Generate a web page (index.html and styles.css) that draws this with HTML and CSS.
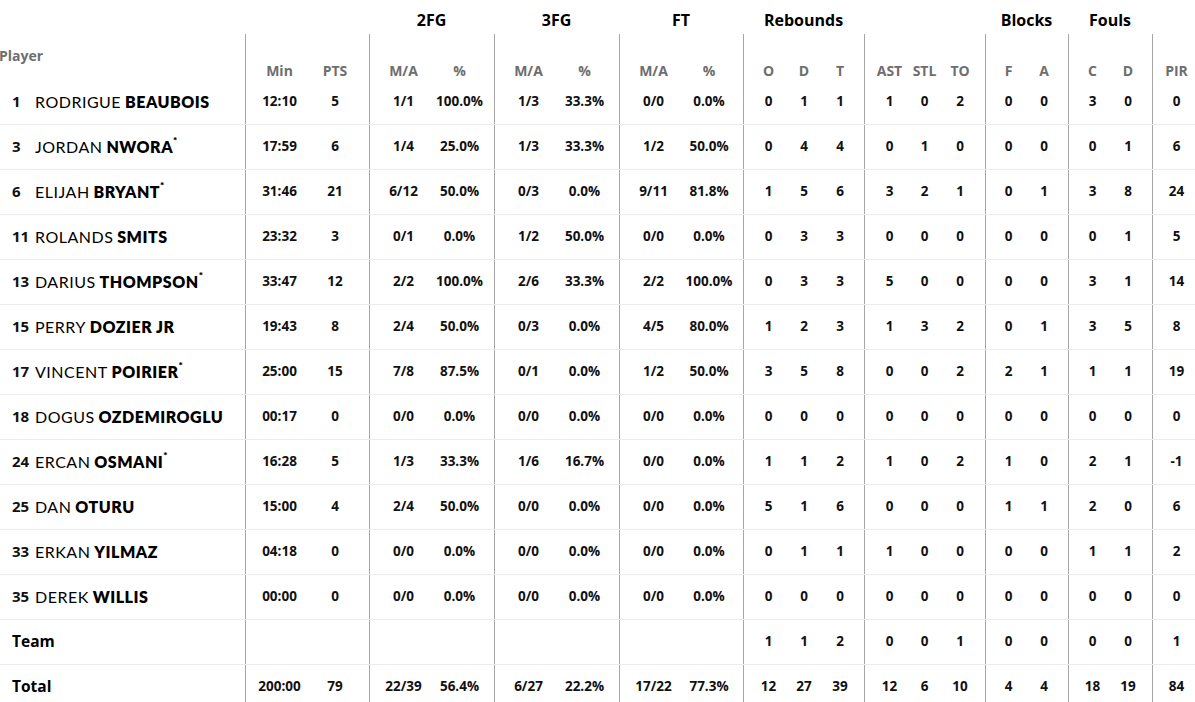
FILE: index.html
```html
<!DOCTYPE html>
<html>
<head>
<meta charset="utf-8">
<link rel="stylesheet" href="styles.css">
</head>
<body>
<div class="box">
  <div class="groups">
    <div></div><div class="span2"></div>
    <div class="span2">2FG</div><div class="span2">3FG</div><div class="span2">FT</div>
    <div class="span3">Rebounds</div><div class="span3"></div>
    <div class="span2">Blocks</div><div class="span2">Fouls</div><div></div>
  </div>
  <div class="row head">
    <div class="pl">Player</div><div>Min</div><div>PTS</div><div>M/A</div><div>%</div><div>M/A</div><div>%</div><div>M/A</div><div>%</div><div>O</div><div>D</div><div>T</div><div>AST</div><div>STL</div><div>TO</div><div>F</div><div>A</div><div>C</div><div>D</div><div>PIR</div>
  </div>
  <div class="row"><div class="pl"><span class="no">1</span><span class="fn">RODRIGUE</span>&nbsp;<b>BEAUBOIS</b></div><div>12:10</div><div>5</div><div>1/1</div><div>100.0%</div><div>1/3</div><div>33.3%</div><div>0/0</div><div>0.0%</div><div>0</div><div>1</div><div>1</div><div>1</div><div>0</div><div>2</div><div>0</div><div>0</div><div>3</div><div>0</div><div>0</div></div>
  <div class="row"><div class="pl"><span class="no">3</span><span class="fn">JORDAN</span>&nbsp;<b>NWORA<sup>*</sup></b></div><div>17:59</div><div>6</div><div>1/4</div><div>25.0%</div><div>1/3</div><div>33.3%</div><div>1/2</div><div>50.0%</div><div>0</div><div>4</div><div>4</div><div>0</div><div>1</div><div>0</div><div>0</div><div>0</div><div>0</div><div>1</div><div>6</div></div>
  <div class="row"><div class="pl"><span class="no">6</span><span class="fn">ELIJAH</span>&nbsp;<b>BRYANT<sup>*</sup></b></div><div>31:46</div><div>21</div><div>6/12</div><div>50.0%</div><div>0/3</div><div>0.0%</div><div>9/11</div><div>81.8%</div><div>1</div><div>5</div><div>6</div><div>3</div><div>2</div><div>1</div><div>0</div><div>1</div><div>3</div><div>8</div><div>24</div></div>
  <div class="row"><div class="pl"><span class="no">11</span><span class="fn">ROLANDS</span>&nbsp;<b>SMITS</b></div><div>23:32</div><div>3</div><div>0/1</div><div>0.0%</div><div>1/2</div><div>50.0%</div><div>0/0</div><div>0.0%</div><div>0</div><div>3</div><div>3</div><div>0</div><div>0</div><div>0</div><div>0</div><div>0</div><div>0</div><div>1</div><div>5</div></div>
  <div class="row"><div class="pl"><span class="no">13</span><span class="fn">DARIUS</span>&nbsp;<b>THOMPSON<sup>*</sup></b></div><div>33:47</div><div>12</div><div>2/2</div><div>100.0%</div><div>2/6</div><div>33.3%</div><div>2/2</div><div>100.0%</div><div>0</div><div>3</div><div>3</div><div>5</div><div>0</div><div>0</div><div>0</div><div>0</div><div>3</div><div>1</div><div>14</div></div>
  <div class="row"><div class="pl"><span class="no">15</span><span class="fn">PERRY</span>&nbsp;<b>DOZIER JR</b></div><div>19:43</div><div>8</div><div>2/4</div><div>50.0%</div><div>0/3</div><div>0.0%</div><div>4/5</div><div>80.0%</div><div>1</div><div>2</div><div>3</div><div>1</div><div>3</div><div>2</div><div>0</div><div>1</div><div>3</div><div>5</div><div>8</div></div>
  <div class="row"><div class="pl"><span class="no">17</span><span class="fn">VINCENT</span>&nbsp;<b>POIRIER<sup>*</sup></b></div><div>25:00</div><div>15</div><div>7/8</div><div>87.5%</div><div>0/1</div><div>0.0%</div><div>1/2</div><div>50.0%</div><div>3</div><div>5</div><div>8</div><div>0</div><div>0</div><div>2</div><div>2</div><div>1</div><div>1</div><div>1</div><div>19</div></div>
  <div class="row"><div class="pl"><span class="no">18</span><span class="fn">DOGUS</span>&nbsp;<b>OZDEMIROGLU</b></div><div>00:17</div><div>0</div><div>0/0</div><div>0.0%</div><div>0/0</div><div>0.0%</div><div>0/0</div><div>0.0%</div><div>0</div><div>0</div><div>0</div><div>0</div><div>0</div><div>0</div><div>0</div><div>0</div><div>0</div><div>0</div><div>0</div></div>
  <div class="row"><div class="pl"><span class="no">24</span><span class="fn">ERCAN</span>&nbsp;<b>OSMANI<sup>*</sup></b></div><div>16:28</div><div>5</div><div>1/3</div><div>33.3%</div><div>1/6</div><div>16.7%</div><div>0/0</div><div>0.0%</div><div>1</div><div>1</div><div>2</div><div>1</div><div>0</div><div>2</div><div>1</div><div>0</div><div>2</div><div>1</div><div>-1</div></div>
  <div class="row"><div class="pl"><span class="no">25</span><span class="fn">DAN</span>&nbsp;<b>OTURU</b></div><div>15:00</div><div>4</div><div>2/4</div><div>50.0%</div><div>0/0</div><div>0.0%</div><div>0/0</div><div>0.0%</div><div>5</div><div>1</div><div>6</div><div>0</div><div>0</div><div>0</div><div>1</div><div>1</div><div>2</div><div>0</div><div>6</div></div>
  <div class="row"><div class="pl"><span class="no">33</span><span class="fn">ERKAN</span>&nbsp;<b>YILMAZ</b></div><div>04:18</div><div>0</div><div>0/0</div><div>0.0%</div><div>0/0</div><div>0.0%</div><div>0/0</div><div>0.0%</div><div>0</div><div>1</div><div>1</div><div>1</div><div>0</div><div>0</div><div>0</div><div>0</div><div>1</div><div>1</div><div>2</div></div>
  <div class="row"><div class="pl"><span class="no">35</span><span class="fn">DEREK</span>&nbsp;<b>WILLIS</b></div><div>00:00</div><div>0</div><div>0/0</div><div>0.0%</div><div>0/0</div><div>0.0%</div><div>0/0</div><div>0.0%</div><div>0</div><div>0</div><div>0</div><div>0</div><div>0</div><div>0</div><div>0</div><div>0</div><div>0</div><div>0</div><div>0</div></div>
  <div class="row"><div class="pl tot">Team</div><div></div><div></div><div></div><div></div><div></div><div></div><div></div><div></div><div>1</div><div>1</div><div>2</div><div>0</div><div>0</div><div>1</div><div>0</div><div>0</div><div>0</div><div>0</div><div>1</div></div>
  <div class="row"><div class="pl tot">Total</div><div>200:00</div><div>79</div><div>22/39</div><div>56.4%</div><div>6/27</div><div>22.2%</div><div>17/22</div><div>77.3%</div><div>12</div><div>27</div><div>39</div><div>12</div><div>6</div><div>10</div><div>4</div><div>4</div><div>18</div><div>19</div><div>84</div></div>
</div>
</body>
</html>
```

FILE: styles.css
```css
html, body {
  margin: 0;
  padding: 0;
  background: #fff;
  overflow: hidden;
}
body {
  font-family: "Open Sans", "Liberation Sans", sans-serif;
  color: #111;
  width: 1195px;
  height: 702px;
}
.box {
  margin-left: -2px;
  width: 1202px;
}
.groups, .row {
  display: grid;
  grid-template-columns: 247px 62px 62px 62px 63px 62px 63px 62px 62px 43px 36px 42px 43px 35px 43px 41px 42px 42px 42px 48px;
}
.groups {
  height: 34px;
  font-weight: 700;
  font-size: 16px;
  color: #000;
}
.groups > div {
  text-align: center;
  padding-top: 9px;
}
.span2 { grid-column: span 2; }
.span3 { grid-column: span 3; }
.row {
  height: 45px;
  border-bottom: 1px solid #ececec;
  box-sizing: border-box;
  font-size: 13.5px;
  font-weight: 700;
}
.row > div {
  box-sizing: border-box;
  display: flex;
  align-items: center;
  justify-content: center;
  white-space: nowrap;
  padding-bottom: 2px;
}
.row > div:nth-child(2),
.row > div:nth-child(4),
.row > div:nth-child(6),
.row > div:nth-child(8),
.row > div:nth-child(10),
.row > div:nth-child(13),
.row > div:nth-child(16),
.row > div:nth-child(18),
.row > div:nth-child(20) {
  border-left: 1px solid #a6a6a6;
}
.row > div:nth-child(2),
.row > div:nth-child(4),
.row > div:nth-child(6),
.row > div:nth-child(8),
.row > div:nth-child(18) { padding-left: 6px; }
.row > div:nth-child(10),
.row > div:nth-child(13) { padding-left: 7px; }
.row > div:nth-child(16) { padding-left: 5px; }
.row > div:nth-child(3),
.row > div:nth-child(5),
.row > div:nth-child(7),
.row > div:nth-child(9),
.row > div:nth-child(12),
.row > div:nth-child(17),
.row > div:nth-child(19) { padding-right: 6px; }
.row > div:nth-child(15) { padding-right: 7px; }

.row > div.pl {
  justify-content: flex-start;
  padding-left: 14px;
  font-size: 15px;
}
.head {
  height: 46px;
  border-bottom: none;
  color: #6e6e6e;
  font-size: 14px;
}
.head > div {
  align-items: flex-end !important;
  padding-bottom: 0;
}
.row.head > div.pl {
  align-items: center !important;
  padding-left: 1px;
  font-size: 14px;
  padding-bottom: 3px;
}
.no {
  display: inline-block;
  width: 23px;
  font-weight: 700;
}
.fn, .pl b {
  font-family: Lato, "Open Sans", sans-serif;
  font-size: 16px;
  letter-spacing: 0.5px;
}
.fn {
  font-weight: 400;
  color: #000;
}
.pl b {
  font-weight: 800;
  color: #000;
}
sup {
  font-size: 10px;
  vertical-align: top;
  position: relative;
  top: -3px;
  letter-spacing: 0;
}
.row > div.tot {
  font-weight: 700;
  font-size: 15.5px;
  color: #000;
}
```
